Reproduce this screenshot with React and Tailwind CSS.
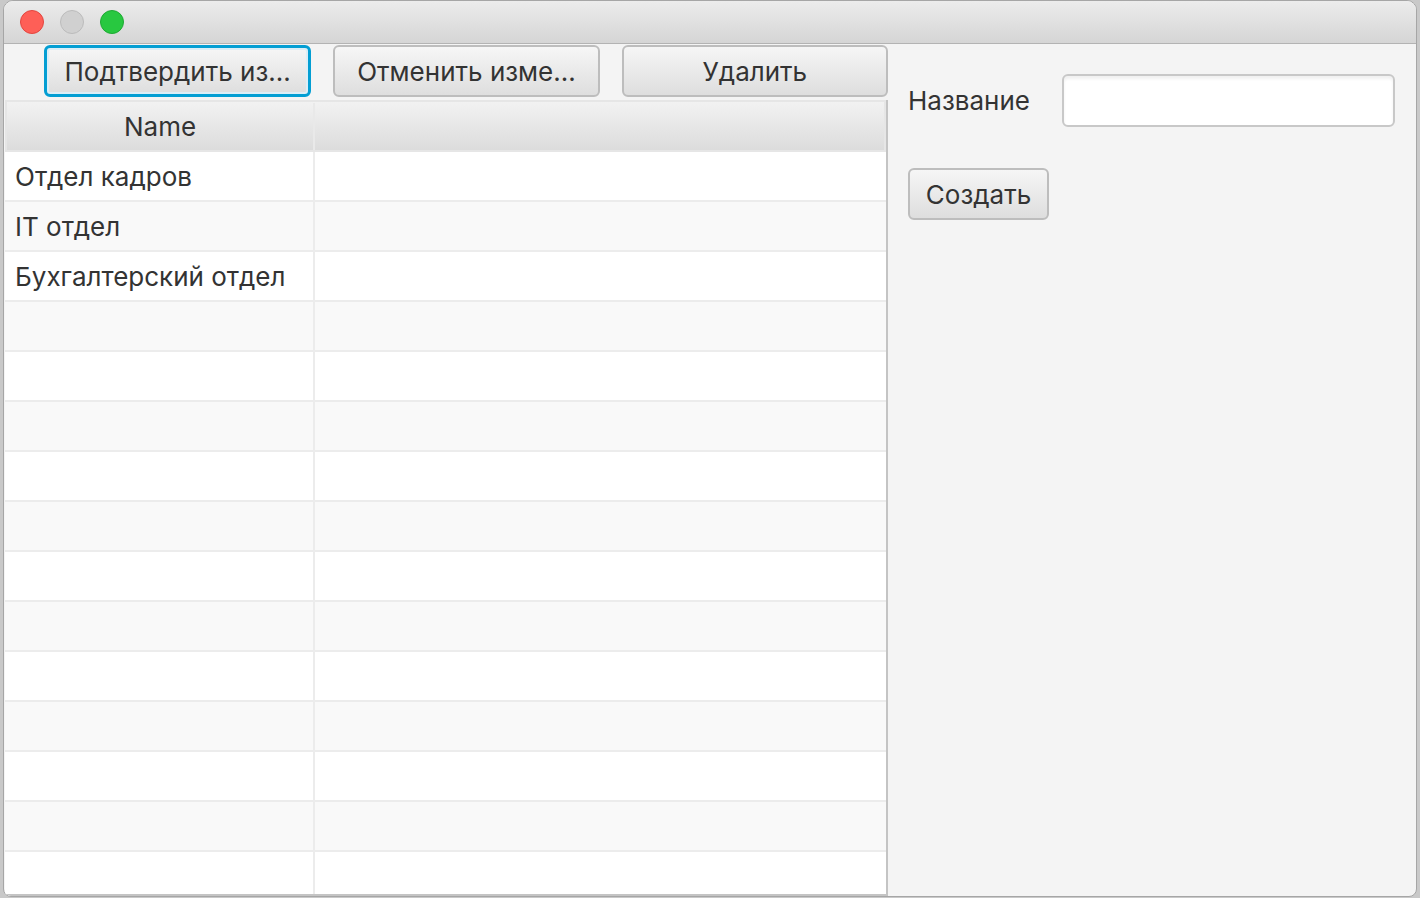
import React from "react";

const departments = ["Отдел кадров", "IT отдел", "Бухгалтерский отдел"];

const font = { fontFamily: "Inter, Roboto, 'Noto Sans', sans-serif" };

const Button = ({ children, focused, className = "" }) => (
  <div
    className={`flex items-center justify-center h-[52px] pt-[1px] rounded-[6px] bg-gradient-to-b from-[#f6f6f6] to-[#dedede] text-[26px] text-[#333333] ${
      focused
        ? "border-[3px] border-[#039ed3] shadow-[inset_0_0_0_2px_#dbeef7]"
        : "border-2 border-[#bdbdbd]"
    } ${className}`}
  >
    {children}
  </div>
);

const App = () => {
  const rows = Array.from({ length: 15 }, (_, i) => departments[i] || "");

  return (
    <div
      className="w-[1420px] h-[898px] bg-[#c9c9c9] pl-[3px] pr-[3px] overflow-hidden"
      style={font}
    >
      <div className="flex flex-col h-[897px] bg-[#f4f4f4] border border-[#a6a6a6] rounded-t-[10px] rounded-b-[8px] overflow-hidden">
        {/* title bar */}
        <div className="flex items-center gap-4 h-[43px] shrink-0 pl-4 bg-gradient-to-b from-[#ececec] to-[#d5d5d5] border-b border-[#b3b3b3]">
          <span className="w-6 h-6 rounded-full bg-[#fe5f57] border border-[#e2463f]" />
          <span className="w-6 h-6 rounded-full bg-[#d0d0d0] border border-[#bbbbbb]" />
          <span className="w-6 h-6 rounded-full bg-[#28c840] border border-[#1ea933]" />
        </div>

        <div className="flex flex-1 min-h-0">
          {/* left pane */}
          <div className="flex flex-col w-[884px] shrink-0">
            <div className="flex gap-[22px] pl-[40px] pt-px h-[56px] shrink-0">
              <Button focused className="w-[268px]">
                Подтвердить из...
              </Button>
              <Button className="w-[267px]">Отменить изме...</Button>
              <Button className="w-[267px]">Удалить</Button>
            </div>
            <div className="flex flex-col flex-1 min-h-0 ml-px bg-white border-r-2 border-b-2 border-[#c4c4c4] overflow-hidden">
              <div className="flex h-[52px] shrink-0 pt-[1px] bg-gradient-to-b from-[#f2f2f2] to-[#dcdcdc] border-2 border-[#e6e6e6] text-[26px] text-[#333333]">
                <div className="flex items-center justify-center w-[308px] border-r-2 border-[#e9e9e9]">
                  Name
                </div>
                <div className="flex-1" />
              </div>
              {rows.map((name, i) => (
                <div
                  key={i}
                  className={`flex h-[50px] shrink-0 border-b-2 border-[#ececec] ${
                    i % 2 === 0 ? "bg-white" : "bg-[#f9f9f9]"
                  }`}
                >
                  <div className="flex items-center w-[310px] pl-[10px] pt-[1px] border-r-2 border-[#ececec] text-[26px] text-[#333333]">
                    {name}
                  </div>
                  <div className="flex-1" />
                </div>
              ))}
            </div>
          </div>

          {/* right pane */}
          <div className="flex flex-col flex-1 pl-5 pr-5 pt-[30px]">
            <div className="flex items-center gap-[32px]">
              <span className="w-[122px] text-[26px] text-[#333333]">
                Название
              </span>
              <div className="w-[333px] h-[53px] rounded-[6px] bg-white border-2 border-[#c8c8c8] shadow-[inset_0_3px_3px_rgba(0,0,0,0.06)]" />
            </div>
            <Button className="w-[141px] mt-[41px]">Создать</Button>
          </div>
        </div>
      </div>
    </div>
  );
};

export default App;
